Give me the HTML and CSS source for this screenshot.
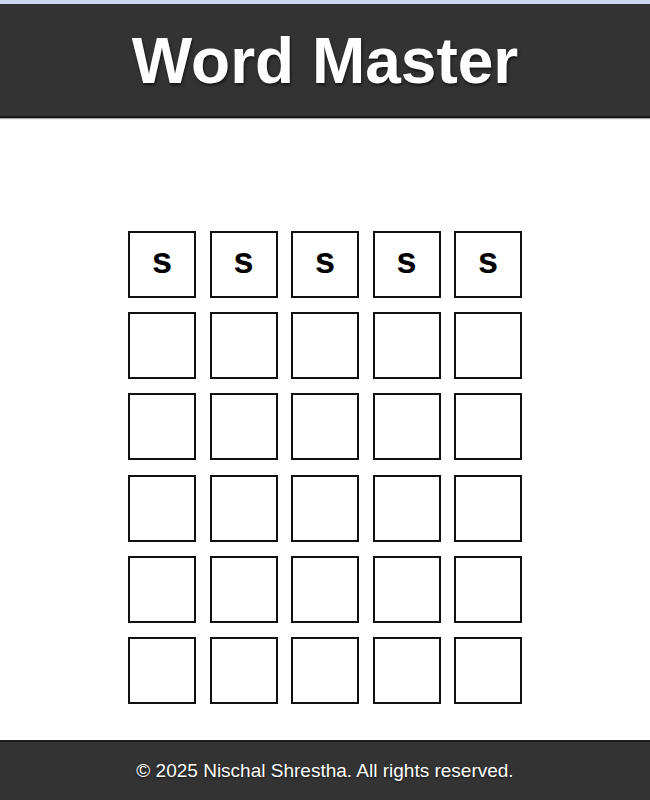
FILE: index.html
```html
<!DOCTYPE html>
<html lang="en">
<head>
<meta charset="utf-8">
<title>Word Master</title>
<link rel="stylesheet" href="styles.css">
</head>
<body>
<header class="site-header">
  <h1 class="title">Word Master</h1>
</header>
<main class="game">
  <div class="board">
    <div class="tile">s</div><div class="tile">s</div><div class="tile">s</div><div class="tile">s</div><div class="tile">s</div>
    <div class="tile"></div><div class="tile"></div><div class="tile"></div><div class="tile"></div><div class="tile"></div>
    <div class="tile"></div><div class="tile"></div><div class="tile"></div><div class="tile"></div><div class="tile"></div>
    <div class="tile"></div><div class="tile"></div><div class="tile"></div><div class="tile"></div><div class="tile"></div>
    <div class="tile"></div><div class="tile"></div><div class="tile"></div><div class="tile"></div><div class="tile"></div>
    <div class="tile"></div><div class="tile"></div><div class="tile"></div><div class="tile"></div><div class="tile"></div>
  </div>
</main>
<footer class="site-footer">
  <p class="copyright">© 2025 Nischal Shrestha. All rights reserved.</p>
</footer>
</body>
</html>
```
FILE: styles.css
```css
html, body {
  margin: 0;
  padding: 0;
  background: #fff;
  font-family: "Liberation Sans", Arial, sans-serif;
}

.site-header {
  border-top: 4px solid #c9d7f0;
  background: #333333;
  padding: 25px 0 23px;
  border-bottom: 2px solid #181818;
  box-shadow: 0 1px 1px rgba(0, 0, 0, 0.35);
  text-align: center;
}

.title {
  margin: 0;
  color: #fff;
  font-size: 64px;
  line-height: 64px;
  font-weight: bold;
  text-shadow: 1px 2px 3px rgba(0, 0, 0, 0.6);
}

.game {
  padding: 113px 0 36px;
  display: flex;
  justify-content: center;
}

.board {
  display: grid;
  grid-template-columns: repeat(5, 68px);
  grid-auto-rows: 67px;
  column-gap: 13.5px;
  row-gap: 14.2px;
}

.tile {
  box-sizing: border-box;
  border: 2.5px solid #111;
  display: flex;
  align-items: center;
  justify-content: center;
  font-size: 36px;
  font-weight: bold;
  color: #000;
  padding-bottom: 8px;
}

.site-footer {
  background: #333333;
  border-top: 2px solid #1c1c1c;
  padding: 18px 0 22px;
  text-align: center;
}

.copyright {
  margin: 0;
  color: #fff;
  font-size: 19px;
  line-height: 22px;
  text-shadow: 0 1px 2px rgba(0, 0, 0, 0.6);
}
```
